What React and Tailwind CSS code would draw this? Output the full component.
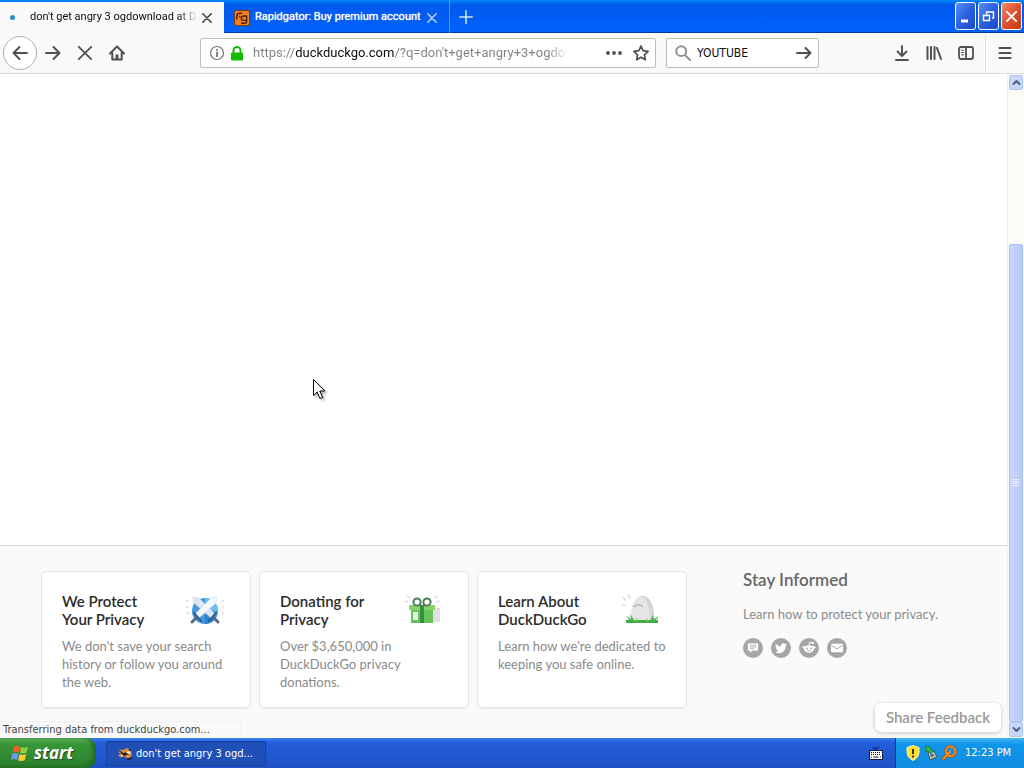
import React from "react";

const uiFont = "font-['DejaVu_Sans_Condensed','Noto_Sans',sans-serif]";

function Stroke({ className = "size-4", width = 2, children, viewBox = "0 0 16 16" }) {
  return (
    <svg className={className} viewBox={viewBox} fill="none" stroke="currentColor" strokeWidth={width} strokeLinecap="round" strokeLinejoin="round" aria-hidden="true">
      {children}
    </svg>
  );
}

const CloseIcon = ({ className = "size-[10px]", width = 1.6 }) => (
  <Stroke className={className} width={width} viewBox="0 0 10 10"><path d="M.8.8l8.4 8.4M9.2.8L.8 9.2" /></Stroke>
);

function RapidgatorIcon() {
  return (
    <svg className="size-4 shrink-0" viewBox="0 0 16 16" aria-hidden="true">
      <rect x=".5" y=".5" width="15" height="15" rx="2" fill="#f58220" stroke="#7a3a10" />
      <path d="M2.800 9.500V6.300Q2.800 3.300 5.800 3.300h2.400M5 6.500h1.500" fill="none" stroke="#4a2208" strokeWidth="1.4" />
      <path d="M12.500 6H9.800Q7.300 6 7.300 8.200T9.800 10.400h2.500M12.600 5.300v5.700q0 2.200-2.200 2.200H7" fill="none" stroke="#4a2208" strokeWidth="1.4" />
    </svg>
  );
}

function TitleBar() {
  const caption = "flex h-7 w-[21px] items-center justify-center rounded-[3px] border border-white text-white";
  return (
    <header className="flex h-[33px] shrink-0 items-stretch bg-linear-to-b from-[#0a86f8] from-0% via-[#0058ec] via-15% to-[#0062fa] to-90% font-[Roboto,sans-serif] shadow-[inset_0_-1px_0_#0038a8]">
      <div className="mt-[2px] flex w-56 items-center bg-[#f9f9fa] pr-[12px] pl-[10px] text-[#0c0c0d]">
        <span className="size-[5px] shrink-0 rounded-full bg-[#2b8fc9]" />
        <span className="ml-[15px] flex-1 overflow-hidden text-[11px] whitespace-nowrap [mask-image:linear-gradient(to_right,black_88%,transparent)]">don't get angry 3 ogdownload at D</span>
        <button aria-label="Close tab" className="ml-[4px] text-[#444]"><CloseIcon /></button>
      </div>
      <div className="flex w-[226px] items-center border-r border-[#4a94ff] pt-[2px] pr-[12px] pl-[10px] text-white">
        <RapidgatorIcon />
        <span className="ml-[5px] flex-1 overflow-hidden text-[11px] whitespace-nowrap [text-shadow:0_0_1px_white]">Rapidgator: Buy premium account</span>
        <button aria-label="Close tab" className="text-[#bcd8ff]"><CloseIcon width={1.4} /></button>
      </div>
      <button aria-label="New tab" className="ml-[9px] text-[#cfe2ff]">
        <Stroke className="size-[14px]" width={1.6} viewBox="0 0 14 14"><path d="M7 .8v12.4M.8 7h12.4" /></Stroke>
      </button>
      <div className="ml-auto flex gap-[2px] pt-[2px] pr-[2px]">
        <button aria-label="Minimize" className={`${caption} bg-linear-to-br from-[#5b8ff5] via-[#2a5fe0] to-[#1c49c8]`}>
          <svg className="size-[15px]" viewBox="0 0 15 15"><path fill="currentColor" d="M3 10.500h7v3H3z" /></svg>
        </button>
        <button aria-label="Restore" className={`${caption} bg-linear-to-br from-[#5b8ff5] via-[#2a5fe0] to-[#1c49c8]`}>
          <svg className="size-[15px]" viewBox="0 0 15 15" fill="none" stroke="currentColor"><path d="M5.500 5V3h7v6H11M5 3h8" strokeWidth="1.4" /><path d="M2.500 6.500h6v5h-6zM2 6.300h7" strokeWidth="1.400" /></svg>
        </button>
        <button aria-label="Close" className={`${caption} bg-linear-to-br from-[#f08a68] via-[#e0512a] to-[#c43a12]`}>
          <CloseIcon className="size-[11px]" width={1.800} />
        </button>
      </div>
    </header>
  );
}

function Toolbar() {
  const box = "flex h-[30px] items-center rounded-[2px] border border-[#bdbdc0] bg-white";
  return (
    <nav className="flex h-[41px] shrink-0 items-center border-b border-[#dcdcde] bg-[#f9f9fa] text-[#505054]">
      <button aria-label="Back" className="ml-[3px] flex size-[34px] items-center justify-center rounded-full border border-[#b0b0b2] bg-white">
        <Stroke><path d="M15 8H1.500M7.500 2l-6 6 6 6" /></Stroke>
      </button>
      <button aria-label="Forward" className="ml-2"><Stroke><path d="M1 8h13.500M8.500 2l6 6-6 6" /></Stroke></button>
      <button aria-label="Stop" className="ml-4"><Stroke width={1.800}><path d="M1.800 1.800l12.400 12.400M14.200 1.800L1.800 14.200" /></Stroke></button>
      <button aria-label="Home" className="ml-4">
        <Stroke><path d="M1 8.500l7-7 7 7M3.300 8v6.500h9.400V8" /><path d="M8 14v-4.500" strokeWidth="3" strokeLinecap="butt" /></Stroke>
      </button>
      <div className={`${box} ml-[75px] min-w-0 flex-1 pr-[6px] pl-[8px]`}>
        <button aria-label="Site information" className="text-[#737376]">
          <Stroke width={1.200}><circle cx="8" cy="8" r="6.500" /><path d="M8 7.300v4M8 4.600v.3" strokeWidth="1.800" /></Stroke>
        </button>
        <svg className="ml-1 h-[15px] w-4 shrink-0" viewBox="0 0 16 15" aria-label="Secure">
          <path d="M4.500 7V4.500a3.500 3.500 0 0 1 7 0V7" fill="none" stroke="#12bc00" strokeWidth="2" />
          <rect x="2" y="6.500" width="12" height="8" rx="1" fill="#12bc00" />
        </svg>
        <input
          aria-label="Address"
          readOnly
          value="https://duckduckgo.com/?q=don't+get+angry+3+ogdownload"
          className="ml-2 w-[315px] min-w-0 bg-[linear-gradient(to_right,#808080_42px,#0c0c0d_42px,#0c0c0d_141px,#808080_141px,#808080_295px,transparent_315px)] bg-clip-text font-[Roboto,sans-serif] text-[13px] text-transparent outline-none"
        />
        <button aria-label="Page actions" className="ml-auto">
          <svg className="size-[18px]" viewBox="0 0 18 18" fill="currentColor"><circle cx="3" cy="9" r="1.900" /><circle cx="9" cy="9" r="1.900" /><circle cx="15" cy="9" r="1.900" /></svg>
        </button>
        <button aria-label="Bookmark this page" className="ml-[10px]">
          <Stroke width={1.700}><path d="M8 1l2.100 4.700 5 .6-3.700 3.500 1 5L8 12.300l-4.400 2.500 1-5L.9 6.300l5-.6z" /></Stroke>
        </button>
      </div>
      <div className={`${box} ml-[10px] w-[153px] px-[8px]`}>
        <Stroke className="size-4 shrink-0 text-[#909094]"><circle cx="6.200" cy="6.200" r="4.900" /><path d="M10 10l5 5" /></Stroke>
        <input aria-label="Search" defaultValue="YOUTUBE" className="ml-[6px] w-0 min-w-0 flex-1 bg-transparent text-[12px] text-[#0c0c0d] outline-none" />
        <button aria-label="Go" className="-mr-[2px]"><Stroke><path d="M1 8h13.500M9.500 3l5 5-5 5" /></Stroke></button>
      </div>
      <button aria-label="Downloads" className="ml-[75px]">
        <Stroke width={1.900}><path d="M8 1v9.500M3.500 6.500L8 11l4.500-4.500M2 15h12" /></Stroke>
      </button>
      <button aria-label="Library" className="ml-4"><Stroke><path d="M1.500 2v12M5 2v12M8.500 2v12M11 3l4 11" /></Stroke></button>
      <button aria-label="Sidebar" className="ml-4">
        <Stroke width={1.800}><rect x="1" y="2" width="14" height="12" rx="2" /><path d="M8 2v12" /><path d="M3.500 5.200h2M3.500 7.500h2M3.500 9.800h2" strokeWidth="1" /></Stroke>
      </button>
      <span className="ml-[11px] h-9 w-px bg-[#dedee0]" />
      <button aria-label="Menu" className="mr-[11px] ml-[11px]"><Stroke><path d="M2.500 3h11M2.500 8h11M2.500 13h11" /></Stroke></button>
    </nav>
  );
}

function SwordsArt() {
  return (
    <svg className="h-9 w-10 shrink-0" viewBox="0 0 40 36" aria-hidden="true">
      <circle cx="20" cy="17" r="13" fill="#3e9be0" />
      <path d="M20 4a13 13 0 0 1 13 13H20z" fill="#6dbdf0" />
      <path d="M20 30a13 13 0 0 0 10-5l-10-9z" fill="#2f86d0" />
      <path d="M8 3l6 1 16 16-4 4L9 9z" fill="#dfe5f1" stroke="#c5cfe0" strokeWidth=".5" />
      <path d="M32 3l-6 1L10 20l4 4L31 9z" fill="#f6f7fb" stroke="#c5cfe0" strokeWidth=".5" />
      <path d="M9 19l7 8M31 19l-7 8" stroke="#34598c" strokeWidth="2" strokeLinecap="round" />
      <path d="M11 24l-4 4M29 24l4 4" stroke="#56698a" strokeWidth="3" strokeLinecap="round" />
      <path d="M4 8L1 6M4 13H1M4 18l-3 2M36 8l3-2M36 13h3M36 18l3 2" stroke="#d3d7dd" strokeWidth="1.200" />
    </svg>
  );
}

function GiftArt() {
  return (
    <svg className="h-9 w-10 shrink-0" viewBox="0 0 40 36" aria-hidden="true">
      <path d="M29 14h8v14H25z" fill="#e0e0e0" />
      <rect x="8" y="14" width="22" height="15" fill="#69c35b" />
      <rect x="6" y="11" width="26" height="5" rx="1" fill="#85d46c" />
      <rect x="17" y="11" width="4" height="18" fill="#398d42" />
      <circle cx="14" cy="8" r="3.600" fill="none" stroke="#4d7d5c" strokeWidth="2" />
      <circle cx="24" cy="8" r="3.600" fill="none" stroke="#4d7d5c" strokeWidth="2" />
      <path d="M16 11l3 1 3-1" fill="none" stroke="#4d7d5c" strokeWidth="2" />
      <rect x="10" y="18" width="5" height="8" fill="#dff5df" />
      <path d="M7 4L4 2M5 8L2 7M31 4l4-2M33 8l4-1" stroke="#d0d4da" strokeWidth="1.200" />
    </svg>
  );
}

function EggArt() {
  return (
    <svg className="h-9 w-10 shrink-0" viewBox="0 0 40 36" aria-hidden="true">
      <path d="M10 28C9 12 14 2 22 2s12 12 11 25z" fill="#d5d5d7" />
      <path d="M10 28C9 12 14 3 20 3s9 12 9 25z" fill="#e6e6e8" />
      <path d="M13 13c2-3 7-3 9 0" fill="none" stroke="#b8b8bb" strokeWidth="1.500" />
      <path d="M5 26h32v3H5z" fill="#3faa49" />
      <path d="M9 27l-4-5 5 3-1-5 5 7zM29 27l3-6 1 4 5-3-4 5z" fill="#4fb556" />
      <path d="M14 27l2-4 1 4zM25 27l1-3 2 3z" fill="#85d46c" />
      <path d="M9 5L7 0M5 7L2 3M5 11H1" stroke="#cfd1d5" strokeWidth="1.200" />
    </svg>
  );
}

const cards = [
  { title: ["We Protect", "Your Privacy"], text: "We don't save your search history or follow you around the web.", Art: SwordsArt },
  { title: ["Donating for", "Privacy"], text: "Over $3,650,000 in DuckDuckGo privacy donations.", Art: GiftArt },
  { title: ["Learn About", "DuckDuckGo"], text: "Learn how we're dedicated to keeping you safe online.", Art: EggArt },
];

function PromoCard({ title, text, Art }) {
  return (
    <a href="#" className="block h-[137px] w-[210px] rounded-[5px] border border-[#e6e6e6] bg-white px-5 pt-5 shadow-[0_1px_2px_rgba(0,0,0,0.06)]">
      <div className="flex items-start justify-between pr-[5px]">
        <h3 className="text-[15px] leading-[18px] font-semibold text-[#2b2b2b]">{title[0]}<br />{title[1]}</h3>
        <div className="-mb-1 pt-[2px]"><Art /></div>
      </div>
      <p className="mt-[9px] text-[13px] leading-[18px] text-[#8a8a8a]">{text}</p>
    </a>
  );
}

const socials = [
  ["Newsletter", <path key="p" d="M4.500 5h11v8H9.500L6.500 15.500V13h-2zM6.500 7.300h7M6.500 9h7M6.500 10.700h4.500" fill="#fff" stroke="#a6a6a6" strokeWidth=".8" />],
  ["Twitter", <path key="p" d="M16 6.300c-.4.300-.9.400-1.400.5.500-.3.900-.8 1.100-1.400-.5.300-1 .5-1.600.600a2.500 2.500 0 0 0-4.200 2.200A7 7 0 0 1 4.800 5.700a2.500 2.500 0 0 0 .8 3.300c-.4 0-.8-.1-1.100-.3 0 1.200.8 2.200 2 2.500-.4.100-.8.100-1.100 0 .3 1 1.200 1.700 2.300 1.700A5 5 0 0 1 4 14c5 3 10.800 0 10.800-6.500.5-.3.900-.700 1.200-1.200z" fill="#fff" />],
  ["Reddit", <g key="p"><ellipse cx="10" cy="11" rx="5" ry="3.800" fill="#fff" /><circle cx="4.800" cy="9.300" r="1.300" fill="#fff" /><circle cx="15.200" cy="9.300" r="1.300" fill="#fff" /><path d="M10 7.500l.7-3.200 2.500.6" fill="none" stroke="#fff" /><circle cx="13.800" cy="5" r="1.200" fill="#fff" /><circle cx="8" cy="10.300" r=".9" fill="#a6a6a6" /><circle cx="12" cy="10.300" r=".9" fill="#a6a6a6" /><path d="M8 12.500q2 1.200 4 0" fill="none" stroke="#a6a6a6" strokeWidth=".8" /></g>],
  ["Email", <g key="p"><rect x="4" y="5.800" width="12" height="8.400" rx="1.200" fill="#fff" /><path d="M4.500 7.500l5.500 3.300 5.500-3.300" fill="none" stroke="#a6a6a6" /></g>],
];

function Page() {
  return (
    <main className="flex min-w-0 flex-1 flex-col bg-white font-[Lato,sans-serif]">
      <div className="flex-1" />
      <footer className="flex h-[193px] border-t border-[#d9d9d9] bg-[#fafafa] pt-[25px] pl-[41px]">
        <div className="flex gap-2">
          {cards.map((c) => <PromoCard key={c.text} {...c} />)}
        </div>
        <section className="ml-14">
          <h2 className="text-[17px] leading-[18px] font-semibold text-[#666]">Stay Informed</h2>
          <p className="mt-4 text-[13px] leading-[18px] text-[#8a8a8a]">Learn how to protect your privacy.</p>
          <div className="mt-[15px] flex gap-2">
            {socials.map(([name, art]) => (
              <a key={name} href="#" aria-label={name}>
                <svg className="size-5" viewBox="0 0 20 20"><circle cx="10" cy="10" r="10" fill="#a6a6a6" />{art}</svg>
              </a>
            ))}
          </div>
        </section>
      </footer>
    </main>
  );
}

function ScrollBar() {
  const btn = "mx-px flex h-[15px] shrink-0 items-center justify-center rounded-[2px] border border-[#b0c4f0] bg-[#c8d6fb] text-[#4d6185]";
  return (
    <div className="flex w-[17px] shrink-0 flex-col border-l border-[#eef0f2] bg-[#fbfbf8] pt-px pb-px">
      <button aria-label="Scroll up" className={btn}><Stroke className="size-[9px]" viewBox="0 0 9 9"><path d="M1.500 6l3-3 3 3" /></Stroke></button>
      <div className="grow-[156]" />
      <div className="mx-px flex grow-[475] items-center justify-center rounded-[2px] border border-[#a9bff2] bg-linear-to-r from-[#cbd7ff] to-[#b9c9fb]">
        <Stroke className="size-2 text-[#edf2ff]" width={1} viewBox="0 0 8 8"><path d="M.5.5h6M.5 2.500h6M.5 4.500h6M.5 6.500h6" /></Stroke>
      </div>
      <button aria-label="Scroll down" className={btn}><Stroke className="size-[9px]" viewBox="0 0 9 9"><path d="M1.500 3l3 3 3-3" /></Stroke></button>
    </div>
  );
}

function TaskBar() {
  return (
    <footer className="flex h-[30px] shrink-0 items-stretch bg-linear-to-b from-[#3a80f0] from-0% via-[#245edb] via-15% to-[#1f50c4]">
      <button className="flex w-24 items-center rounded-r-[10px] bg-linear-to-b from-[#5eb15e] from-0% via-[#379637] via-20% to-[#2c7f2c] pl-[10px] text-white shadow-[inset_-3px_-1px_4px_#1f661f]">
        <svg className="size-[20px]" viewBox="0 0 20 20" aria-hidden="true">
          <path d="M4 3.500Q7 1.800 10 3.500L8.700 9.500Q6 8 2.600 9.500z" fill="#f0602c" />
          <path d="M11 4q3 1.500 7-.3l-1.500 6q-3.500 1.500-6.700 0z" fill="#8bd13a" />
          <path d="M2.300 10.800q3.200-1.500 6.100 0L7 17q-3-1.800-6.200-.2z" fill="#6a9cf5" />
          <path d="M9.500 11.200q3.300 1.500 6.700 0l-1.500 6.100q-3.200 1.500-6.600 0z" fill="#fccb3a" />
        </svg>
        <span className="ml-1 font-['Open_Sans','Noto_Sans',sans-serif] text-[17px] leading-5 font-bold italic [text-shadow:1px_1px_1px_#205020]">start</span>
      </button>
      <button className="mt-[3px] mb-[2px] ml-[10px] flex w-40 items-center rounded-[2px] border border-[#17419c] bg-[#1f50b8] pt-px pl-[10px] text-[11px] text-white">
        <svg className="size-4 shrink-0" viewBox="0 0 16 16" aria-hidden="true">
          <path d="M1 3l4 1 3-1 3-1 1 2 2 1 1 4-2 3H9l-2-2-4 1-2-2 3-1-3-2 3-1z" fill="#d98b45" />
          <path d="M2 4l4 3 5-1 1 2-5 2-3-3zM8 11l3 2 3-2 1 2-4 1zM12 3l2 1-2 1z" fill="#241a18" />
          <path d="M11 5l3 1-2 2-3-1zM4 9l3 1-3 1z" fill="#f7ead8" />
        </svg>
        <span className="ml-[3px]">don't get angry 3 ogd...</span>
      </button>
      <svg className="my-auto ml-auto h-[14px] w-[14px]" viewBox="0 0 14 14" aria-hidden="true">
        <path d="M4 3q0-2 2-1t4-1M7 5V3" stroke="#0b1d55" fill="none" />
        <rect x=".5" y="4.500" width="13" height="9" fill="#fff" stroke="#0b1d55" />
        <path d="M2 6.500h10M2 8.500h10" stroke="#111" strokeDasharray="1 1" /><path d="M2 11h1M4.500 11h5M11 11h1" stroke="#111" />
      </svg>
      <div className="ml-3 flex w-[129px] items-center border-l border-[#0a3a9c] bg-linear-to-b from-[#3fb5f5] from-0% via-[#0f96ea] via-20% to-[#128ce0] pl-[9px] text-[11px] text-white">
        <svg className="size-4" viewBox="0 0 16 16" aria-hidden="true"><path d="M8 .5l6 2v5q0 5-6 8-6-3-6-8v-5z" fill="#ffe11f" stroke="#f5f1c8" /><path d="M8 4v5M8 10.500v2" stroke="#333" strokeWidth="2" /></svg>
        <svg className="ml-[2px] size-4" viewBox="0 0 16 16" aria-hidden="true"><path d="M5 8l6-2 3 6-7 3z" fill="#bcc4bd" stroke="#3e5247" /><path d="M7 9.500l3-1 1 2.500-3 1z" fill="#3f6788" /><path d="M3 1l5 1-1 1.500 3 3-2.500 2-2.800-3L3 7z" fill="#32b83e" stroke="#17692a" strokeWidth=".6" /></svg>
        <svg className="ml-[2px] size-4" viewBox="0 0 16 16" fill="none" aria-hidden="true"><circle cx="9.500" cy="6.300" r="4.800" stroke="#8e4a10" strokeWidth="3" /><path d="M6 10l-4.500 4.500" stroke="#8e4a10" strokeWidth="3.500" /><circle cx="9.500" cy="6.300" r="4.800" stroke="#f58a1f" strokeWidth="2" /><path d="M6 10l-4.200 4.200M9.500 6.300L5.500 10" stroke="#f58a1f" strokeWidth="2.200" /></svg>
        <time className="ml-2 whitespace-nowrap">12:23 PM</time>
      </div>
    </footer>
  );
}

export default function App() {
  return (
    <div className={`flex h-screen flex-col overflow-hidden ${uiFont}`}>
      <TitleBar />
      <Toolbar />
      <div className="relative flex min-h-0 flex-1">
        <Page />
        <ScrollBar />
        <div role="status" className="absolute bottom-0 left-0 flex h-[17px] w-[242px] items-center border-t border-r border-[#f0f0f0] bg-[#f9f9fa] pl-[3px] text-[11px] text-[#444]">Transferring data from duckduckgo.com...</div>
        <button className="absolute right-[23px] bottom-[6px] h-[29px] w-[126px] rounded-[6px] bg-white font-[Lato,sans-serif] text-[15px] font-semibold text-[#999] shadow-[0_1px_4px_rgba(0,0,0,0.22)]">Share Feedback</button>
        <svg className="absolute top-[304px] left-[312px] h-6 w-4 drop-shadow-[2px_2px_1px_rgba(0,0,0,0.3)]" viewBox="0 0 16 24" aria-hidden="true">
          <path d="M1.500 1.500v16l3.700-3.500 2.700 6.500 2.700-1.200-2.800-6.300h5z" fill="#fff" stroke="#000" />
        </svg>
      </div>
      <TaskBar />
    </div>
  );
}
